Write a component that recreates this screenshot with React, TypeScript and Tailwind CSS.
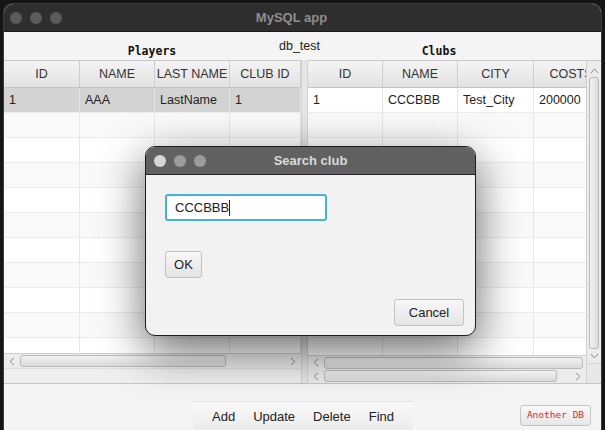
import React from "react";

const leftCols = [
  { label: "ID", w: "w-[76px]" },
  { label: "NAME", w: "w-[75px]" },
  { label: "LAST NAME", w: "w-[75px]" },
  { label: "CLUB ID", w: "w-[71px]" },
];
const rightCols = [
  { label: "ID", w: "w-[75px]" },
  { label: "NAME", w: "w-[75px]" },
  { label: "CITY", w: "w-[76px]" },
  { label: "COSTS", w: "w-[75px]" },
];

function Chevron({ dir }: { dir: "l" | "r" | "u" | "d" }) {
  const d =
    dir === "l"
      ? "M5 1 L1 4.5 L5 8"
      : dir === "r"
      ? "M1 1 L5 4.5 L1 8"
      : dir === "u"
      ? "M1 5 L4.5 1 L8 5"
      : "M1 1 L4.5 5 L8 1";
  const vb = dir === "l" || dir === "r" ? "0 0 6 9" : "0 0 9 6";
  const cls = dir === "l" || dir === "r" ? "w-[6px] h-[9px]" : "w-[9px] h-[6px]";
  return (
    <svg viewBox={vb} className={cls} fill="none" stroke="#8a8a8a" strokeWidth="1">
      <path d={d} />
    </svg>
  );
}

function Header({ cols }: { cols: { label: string; w: string }[] }) {
  return (
    <div className="flex h-[27px] border-b border-[#c4c4c4] shrink-0">
      {cols.map((c, i) => (
        <div
          key={i}
          className={`${c.w} shrink-0 h-full flex items-center justify-center bg-gradient-to-b from-[#f4f4f4] to-[#e2e2e2] border-r border-[#cdcdcd] text-[12.5px] text-[#333] whitespace-nowrap overflow-hidden`}
        >
          {c.label}
        </div>
      ))}
    </div>
  );
}

function Rows({
  cols,
  first,
  firstBg,
  count,
}: {
  cols: { label: string; w: string }[];
  first: string[];
  firstBg: string;
  count: number;
}) {
  const rows = Array.from({ length: count });
  return (
    <div className="flex-1 overflow-hidden">
      {rows.map((_, r) => (
        <div
          key={r}
          className={`flex h-[25px] border-b border-[#ebebeb] ${
            r === 0 ? firstBg : r % 2 === 1 ? "bg-[#f9f9f9]" : "bg-white"
          }`}
        >
          {cols.map((c, i) => (
            <div
              key={i}
              className={`${c.w} shrink-0 h-full flex items-center pl-[5px] border-r border-[#e6e6e6] text-[12.5px] text-[#222] whitespace-nowrap overflow-hidden`}
            >
              {r === 0 ? first[i] : ""}
            </div>
          ))}
        </div>
      ))}
    </div>
  );
}

function Lights({ colors, gap }: { colors: string[]; gap: string }) {
  return (
    <div className={`flex ${gap}`}>
      {colors.map((c, i) => (
        <div key={i} className={`w-[12px] h-[12px] rounded-full ${c}`} />
      ))}
    </div>
  );
}

export default function App() {
  return (
    <div className="relative w-[605px] h-[430px] bg-[#151515] pt-[3px] px-[3px] overflow-hidden font-['Liberation_Sans',Arial,sans-serif]">
      <div className="h-[427px] rounded-t-[10px] bg-[#f4f4f4] overflow-hidden flex flex-col border-x border-t border-[#3a3a3a]">
        {/* title bar */}
        <div className="h-[28px] shrink-0 bg-[#2e2e2e] flex items-center px-[6px] relative border-b border-[#1a1a1a]">
          <Lights colors={["bg-[#5c5c5c]", "bg-[#5c5c5c]", "bg-[#5c5c5c]"]} gap="gap-[8px]" />
          <div className="flex-1 text-center text-[13px] font-bold text-[#8e8e8e] -ml-[74px]">MySQL app</div>
        </div>

        {/* labels */}
        <div className="grid h-[28px] shrink-0">
          <div className="[grid-area:1/1] flex justify-center pt-[5px]">
            <span className="text-[12.5px] text-[#222] ml-[-6px]">db_test</span>
          </div>
          <div className="[grid-area:1/1] flex items-end pb-[0px]">
            <div className="w-[296px] text-center font-['DejaVu_Sans_Mono',monospace] font-bold text-[11.5px] text-[#111]">
              Players
            </div>
            <div className="w-[270px] ml-[4px] text-center font-['DejaVu_Sans_Mono',monospace] font-bold text-[11.5px] text-[#111]">
              Clubs
            </div>
          </div>
        </div>

        {/* tables */}
        <div className="flex h-[324px] shrink-0 border-b border-[#c6c6c6]">
          {/* left */}
          <div className="w-[297px] shrink-0 flex flex-col border-t border-[#c8c8c8]">
            <Header cols={leftCols} />
            <Rows cols={leftCols} first={["1", "AAA", "LastName", "1"]} firstBg="bg-[#d3d3d3]" count={11} />
            <div className="h-[15px] flex items-center bg-[#ececec] border-t border-[#d0d0d0]">
              <div className="w-[16px] flex justify-center">
                <Chevron dir="l" />
              </div>
              <div className="h-[12px] w-[206px] rounded-[3px] border border-[#b9b9b9] bg-gradient-to-b from-[#f2f2f2] to-[#dadada]" />
              <div className="flex-1" />
              <div className="w-[16px] flex justify-center">
                <Chevron dir="r" />
              </div>
            </div>
            <div className="h-[15px] bg-[#efefef] border-t border-[#dedede]" />
          </div>
          {/* splitter */}
          <div className="w-[7px] shrink-0 bg-[#e6e6e6] border-x border-[#d2d2d2]" />
          {/* right */}
          <div className="flex-1 flex border-t border-[#c8c8c8] min-w-0">
            <div className="flex-1 flex flex-col min-w-0 overflow-hidden">
              <Header cols={rightCols} />
              <Rows cols={rightCols} first={["1", "CCCBBB", "Test_City", "200000"]} firstBg="bg-white" count={11} />
              <div className="h-[14px] flex items-center bg-[#ececec] border-t border-[#d0d0d0]">
                <div className="w-[16px] flex justify-center">
                  <Chevron dir="l" />
                </div>
                <div className="h-[12px] flex-1 mr-[3px] rounded-[3px] border border-[#b9b9b9] bg-gradient-to-b from-[#f2f2f2] to-[#dadada]" />
              </div>
              <div className="h-[14px] flex items-center bg-[#ececec]">
                <div className="w-[16px] flex justify-center">
                  <Chevron dir="l" />
                </div>
                <div className="h-[12px] w-[233px] rounded-[3px] border border-[#b9b9b9] bg-gradient-to-b from-[#f2f2f2] to-[#dadada]" />
                <div className="flex-1" />
                <div className="w-[16px] flex justify-center">
                  <Chevron dir="r" />
                </div>
              </div>
            </div>
            {/* vertical scrollbar */}
            <div className="w-[15px] shrink-0 flex flex-col bg-[#ececec] border-l border-[#d0d0d0]">
              <div className="h-[16px] flex items-center justify-center pt-[3px]">
                <Chevron dir="u" />
              </div>
              <div className="mx-[2px] h-[272px] rounded-[3px] border border-[#b9b9b9] bg-gradient-to-r from-[#f2f2f2] to-[#dcdcdc]" />
              <div className="h-[14px] flex items-center justify-center">
                <Chevron dir="d" />
              </div>
              <div className="flex-1 bg-[#e8e8e8] border-t border-[#d6d6d6]" />
            </div>
          </div>
        </div>

        {/* bottom */}
        <div className="flex-1 flex items-start pt-[17px]">
          <div className="ml-[189px] w-[220px] h-[30px] flex items-center justify-around px-[10px] bg-gradient-to-b from-[#f9f9f9] to-[#ebebeb] border-t border-[#e2e2e2] text-[13px] text-[#222]">
            <span>Add</span>
            <span>Update</span>
            <span>Delete</span>
            <span>Find</span>
          </div>
          <div className="ml-[107px] mt-[4px] w-[71px] h-[21px] flex items-center justify-center rounded-[3px] border border-[#c6c6c6] bg-gradient-to-b from-[#fafafa] to-[#e6e6e6] font-['DejaVu_Sans_Mono',monospace] text-[9.5px] text-[#e0262c]">
            Another DB
          </div>
        </div>
      </div>

      {/* dialog */}
      <div className="absolute left-[145px] top-[146px] w-[331px] h-[190px] rounded-[10px] border border-[#1e1e1e] bg-[#f2f2f2] overflow-hidden shadow-[0_14px_45px_rgba(0,0,0,0.6)] flex flex-col">
        <div className="h-[28px] shrink-0 bg-[#616161] border-b border-[#262626] flex items-center px-[8px]">
          <Lights colors={["bg-[#d6d6d6]", "bg-[#9c9c9c]", "bg-[#9c9c9c]"]} gap="gap-[8px]" />
          <div className="flex-1 text-center text-[13px] font-bold text-[#dadada] -ml-[52px]">Search club</div>
        </div>
        <div className="flex-1 flex flex-col px-[19px] pt-[19px]">
          <div className="w-[162px] h-[27px] rounded-[3px] border-2 border-[#45b3e0] bg-white flex items-center pl-[8px] text-[13px] text-[#222]">
            <span>CCCBBB</span>
            <span className="w-px h-[16px] bg-[#222]" />
          </div>
          <div className="mt-[30px] w-[37px] h-[27px] rounded-[3px] border border-[#c2c2c2] bg-gradient-to-b from-[#f8f8f8] to-[#e4e4e4] flex items-center justify-center text-[13px] text-[#222]">
            OK
          </div>
          <div className="mt-[21px] self-end mr-[-8px] w-[70px] h-[27px] rounded-[3px] border border-[#c2c2c2] bg-gradient-to-b from-[#f8f8f8] to-[#e4e4e4] flex items-center justify-center text-[13px] text-[#222]">
            Cancel
          </div>
        </div>
      </div>
    </div>
  );
}
